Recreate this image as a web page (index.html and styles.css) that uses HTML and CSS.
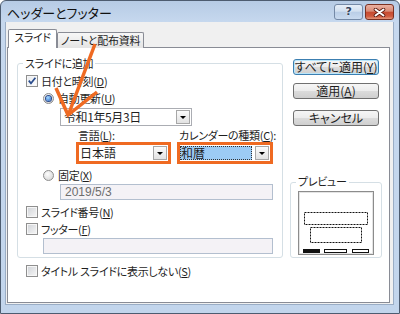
FILE: index.html
```html
<!DOCTYPE html>
<html lang="ja">
<head>
    <meta charset="UTF-8">
    <meta name="viewport" content="width=device-width, initial-scale=1.0">
    <title>ヘッダーとフッター</title>
    <link rel="stylesheet" href="styles.css">
</head>
<body>
    <div class="window">
        <div class="titlebar">
            <span class="title">ヘッダーとフッター</span>
            <div class="caption-buttons">
                <span class="cap-btn help">?</span>
                <span class="cap-btn close">
                    <svg width="13" height="9" viewBox="0 0 13 9">
                        <path d="M2.5 1.5 L10.5 7.5 M10.5 1.5 L2.5 7.5" stroke="#5b1a10" stroke-width="3.6" stroke-linecap="round"/>
                        <path d="M2.5 1.5 L10.5 7.5 M10.5 1.5 L2.5 7.5" stroke="#fff" stroke-width="2" stroke-linecap="round"/>
                    </svg>
                </span>
            </div>
        </div>

        <div class="client">
            <div class="tabs">
                <div class="tab active">スライド</div>
                <div class="tab inactive">ノートと配布資料</div>
            </div>

            <div class="panel">
                <div class="panel-row">
                    <div class="group main-group">
                        <div class="group-title">スライドに追加</div>

                        <div class="check-row opt-date">
                            <span class="checkbox checked">
                                <svg width="10" height="10" viewBox="0 0 10 10"><path d="M1.8 4.6 L4 7.4 L8.4 1.8" fill="none" stroke="#2a4c8c" stroke-width="1.7"/></svg>
                            </span>
                            <span>日付と時刻(<u>D</u>)</span>
                        </div>

                        <div class="radio-row opt-auto">
                            <span class="radio checked"></span>
                            <span>自動更新(<u>U</u>)</span>
                        </div>

                        <div class="combo date-combo">
                            <span class="combo-text">令和1年5月3日</span>
                            <span class="drop-btn"></span>
                        </div>

                        <div class="combo-pair">
                            <div class="combo-col lang-col">
                                <div class="combo-label">言語(<u>L</u>):</div>
                                <div class="combo marked">
                                    <span class="combo-text">日本語</span>
                                    <span class="drop-btn"></span>
                                </div>
                            </div>
                            <div class="combo-col cal-col">
                                <div class="combo-label">カレンダーの種類(<u>C</u>):</div>
                                <div class="combo marked">
                                    <span class="combo-text selected">和暦</span>
                                    <span class="drop-btn"></span>
                                </div>
                            </div>
                        </div>

                        <div class="radio-row opt-fixed">
                            <span class="radio"></span>
                            <span>固定(<u>X</u>)</span>
                        </div>

                        <div class="textbox fixed-box">2019/5/3</div>

                        <div class="check-row opt-number">
                            <span class="checkbox"></span>
                            <span>スライド番号(<u>N</u>)</span>
                        </div>

                        <div class="check-row opt-footer">
                            <span class="checkbox"></span>
                            <span>フッター(<u>F</u>)</span>
                        </div>

                        <div class="textbox footer-box"></div>
                    </div>

                    <div class="side">
                        <div class="btn default btn-all">すべてに適用(<u>Y</u>)</div>
                        <div class="btn btn-apply">適用(<u>A</u>)</div>
                        <div class="btn btn-cancel">キャンセル</div>

                        <div class="group preview-group">
                            <div class="group-title">プレビュー</div>
                            <div class="preview">
                                <svg width="76" height="64" viewBox="0 0 76 64">
                                    <rect x="0.5" y="0.5" width="75" height="63" fill="#fff" stroke="#8c8c8c"/>
                                    <rect x="1.5" y="1.5" width="73" height="61" fill="none" stroke="#e4e4e4"/>
                                    <rect x="6.5" y="21.5" width="63" height="12" fill="none" stroke="#111" stroke-dasharray="2 1"/>
                                    <rect x="12.5" y="36.5" width="51" height="15" fill="none" stroke="#111" stroke-dasharray="2 1"/>
                                    <rect x="5" y="58" width="17" height="4" fill="#111"/>
                                    <rect x="26.5" y="58.5" width="22" height="3" fill="#fff" stroke="#111"/>
                                    <rect x="54.5" y="58.5" width="16" height="3" fill="#fff" stroke="#111"/>
                                </svg>
                            </div>
                        </div>
                    </div>
                </div>

                <div class="check-row opt-title">
                    <span class="checkbox"></span>
                    <span>タイトル スライドに表示しない(<u>S</u>)</span>
                </div>
            </div>
        </div>
    </div>

    <!-- orange pointer drawn over the dialog -->
    <svg class="annotation" width="400" height="314" viewBox="0 0 400 314">
        <path d="M95 44 L69 113" stroke="#ef6a22" stroke-width="3.5" fill="none"/>
        <path d="M56 88 L68 115 L97 92" stroke="#ef6a22" stroke-width="3.5" fill="none" stroke-linejoin="miter"/>
    </svg>
</body>
</html>
```

FILE: styles.css
```css
* {
    box-sizing: border-box;
}
body {
    margin: 0;
    position: relative;
    width: 400px;
    height: 314px;
    overflow: hidden;
    font-family: "Noto Sans CJK JP", sans-serif;
    font-size: 11px;
    line-height: 14px;
    letter-spacing: -0.3px;
    color: #1e1e1e;
    font-feature-settings: "palt";
}
u {
    text-decoration-thickness: 1px;
    text-underline-offset: 1px;
}

/* window frame */
.window {
    width: 400px;
    height: 314px;
    display: flex;
    flex-direction: column;
    padding: 0 5px 8px 4px;
    border: 1px solid #4d5c70;
    border-radius: 6px 6px 0 0;
    background: linear-gradient(#b6cbe5, #c6d8ee 21px, #c2d5ec);
}
.titlebar {
    height: 21px;
    flex-shrink: 0;
    display: flex;
    align-items: flex-start;
}
.title {
    padding: 5px 0 0 2px;
    font-size: 13px;
    letter-spacing: 0;
    color: #111;
}
.caption-buttons {
    margin-left: auto;
    margin-top: 3px;
    display: flex;
    gap: 2px;
}
.cap-btn {
    width: 29px;
    height: 16px;
    border-radius: 3px;
    display: flex;
    align-items: center;
    justify-content: center;
}
.help {
    border: 1px solid #7489a6;
    background: linear-gradient(#e6eef8, #d2e0f0 45%, #b9cde6 50%, #c9daef);
    color: #33435c;
    font-family: "DejaVu Sans", sans-serif;
    font-weight: bold;
    font-size: 11px;
    text-shadow: 0 0 2px #fff;
}
.close {
    border: 1px solid #7a3021;
    background: linear-gradient(#eab1a2, #d98a75 45%, #c64a30 50%, #cf5a3e 80%, #e3977c);
}

.client {
    flex: 1;
    background: #f0f0f0;
    border: 1px solid #9aadc5;
    border-top: none;
    padding-left: 1px;
}

/* tabs */
.tabs {
    display: flex;
    align-items: flex-end;
    height: 19px;
    margin-top: 7px;
    padding-left: 1px;
}
.tab {
    height: 16px;
    border: 1px solid #898c95;
    border-bottom: none;
    border-radius: 2px 2px 0 0;
    background: linear-gradient(#f7f7f7, #e4e4e4);
    text-align: center;
    white-space: nowrap;
}
.tab.active {
    position: relative;
    z-index: 1;
    width: 49px;
    height: 19px;
    background: #fff;
}
.tab.inactive {
    width: 87px;
}
.panel {
    width: 383px;
    height: 256px;
    margin-top: -1px;
    padding-left: 9px;
    border: 1px solid #898c95;
    background: #fff;
}
.panel-row {
    display: flex;
}

/* group boxes */
.group {
    border: 1px solid #d5dfe5;
    border-radius: 3px;
}
.group-title {
    width: max-content;
    margin: -8px 0 0 5px;
    padding: 0 2px;
    background: #fff;
}
.main-group {
    width: 266px;
    margin-top: 15px;
    padding-bottom: 3px;
}

.check-row,
.radio-row {
    display: flex;
    align-items: center;
    height: 14px;
    white-space: nowrap;
}
.check-row {
    gap: 3px;
}
.radio-row {
    gap: 4px;
    margin-left: 25px;
}
.opt-date {
    margin-top: 4px;
    padding-left: 8px;
}
.opt-auto {
    margin-top: 3px;
}
.opt-fixed {
    margin-top: 4px;
}
.opt-number {
    margin-top: 5px;
    padding-left: 8px;
}
.opt-footer {
    margin-top: 3px;
    padding-left: 8px;
}
.opt-title {
    margin-top: 6px;
    padding-left: 9px;
}

.checkbox {
    width: 12px;
    height: 12px;
    flex-shrink: 0;
    display: flex;
    align-items: center;
    justify-content: center;
    border: 1px solid #8f8f8f;
    background: linear-gradient(135deg, #cfd2d7, #f7f7f7);
    box-shadow: inset 0 0 0 1px #f6f6f6;
}
.checkbox.checked {
    background: linear-gradient(135deg, #e6e9ee, #ffffff);
}
.radio {
    width: 11px;
    height: 11px;
    flex-shrink: 0;
    display: flex;
    align-items: center;
    justify-content: center;
    border: 1px solid #8d8d8d;
    border-radius: 50%;
    background: radial-gradient(circle at 40% 35%, #fdfdfd, #cfcfcf);
}
.radio.checked::after {
    content: "";
    width: 5px;
    height: 5px;
    border-radius: 50%;
    background: radial-gradient(circle at 40% 35%, #a6dbff, #1d5cc4);
    box-shadow: 0 0 0 1px #29498a;
}

/* combo boxes */
.combo {
    display: flex;
    align-items: center;
    background: #fff;
    font-size: 12px;
    letter-spacing: 0;
}
.combo-text {
    flex: 1;
    padding-left: 3px;
    white-space: nowrap;
}
.date-combo {
    width: 132px;
    height: 18px;
    margin: 3px 0 0 42px;
    border: 1px solid #abadb3;
}
.date-combo .combo-text {
    letter-spacing: -0.4px;
}
.drop-btn {
    width: 14px;
    height: 14px;
    margin-right: 1px;
    display: flex;
    align-items: center;
    justify-content: center;
    border: 1px solid #a7a7a7;
    background: linear-gradient(#fbfbfb, #e2e2e2);
}
.drop-btn::after {
    content: "";
    border-left: 3px solid transparent;
    border-right: 3px solid transparent;
    border-top: 3px solid #000;
}
.combo-pair {
    display: flex;
    gap: 6px;
    margin: 2px 0 0 58px;
}
.lang-col {
    width: 95px;
}
.cal-col {
    width: 96px;
}
.combo-label {
    padding-left: 2px;
    white-space: nowrap;
}
.combo.marked {
    height: 22px;
    border: 3px solid #ef6a22;
}
.combo.marked .combo-text {
    padding-left: 1px;
}
.combo-text.selected {
    height: 14px;
    margin-right: 3px;
    background: #9ccbf4;
    outline: 1px dotted #333;
    outline-offset: -1px;
    line-height: 14px;
}

/* text boxes */
.textbox {
    height: 16px;
    border: 1px solid #b3bfcf;
    background: #f4f2f6;
}
.fixed-box {
    width: 213px;
    margin: 2px 0 0 42px;
    padding-left: 4px;
    color: #6d6d6d;
    font-family: "Liberation Sans", sans-serif;
    font-size: 12px;
    letter-spacing: 0;
}
.footer-box {
    width: 230px;
    margin: 2px 0 0 25px;
}

/* right column */
.side {
    width: 92px;
    margin-left: 7px;
    display: flex;
    flex-direction: column;
}
.btn {
    width: 86px;
    height: 16px;
    margin-left: 3px;
    border: 1px solid #707070;
    border-radius: 3px;
    background: linear-gradient(#f6f6f6, #ececec 50%, #dcdcdc 50%, #cfcfcf);
    text-align: center;
    font-size: 12px;
    letter-spacing: 0;
    white-space: nowrap;
}
.btn.default {
    border-color: #3c7fb1;
    box-shadow: inset 0 0 0 1px #b9e6fb;
}
.btn-all {
    margin-top: 11px;
}
.btn-apply {
    margin-top: 8px;
}
.btn-cancel {
    margin-top: 11px;
}
.preview-group {
    margin-top: auto;
    height: 76px;
}
.preview-group .group-title {
    margin-top: -9px;
}
.preview {
    width: 76px;
    height: 64px;
    margin: 3px 0 0 7px;
}
.preview svg {
    display: block;
}

.annotation {
    position: absolute;
    top: 0;
    left: 0;
    pointer-events: none;
}
```
